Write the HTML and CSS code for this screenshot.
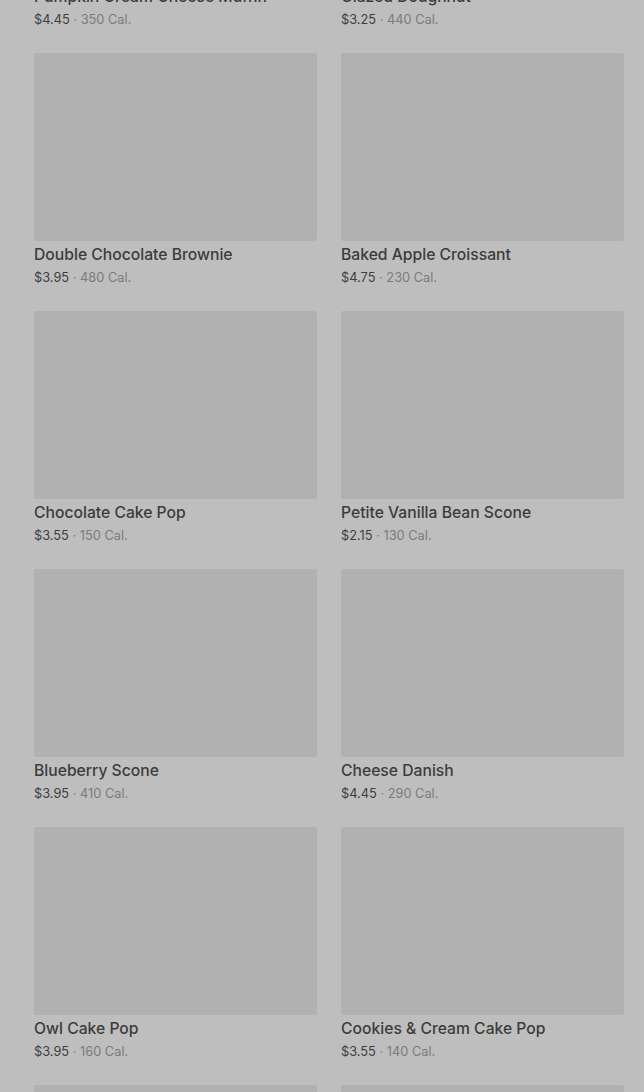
FILE: index.html
```html
<!DOCTYPE html>
<html lang="en">
<head>
    <meta charset="UTF-8">
    <meta name="viewport" content="width=device-width, initial-scale=1.0">
    <title>Bakery</title>
    <link rel="stylesheet" href="styles.css">
</head>
<body>
    <div class="menu-grid">
        <div class="item">
            <div class="item-image"></div>
            <div class="item-name">Pumpkin Cream Cheese Muffin</div>
            <div class="item-info"><span class="price">$4.45</span> · 350 Cal.</div>
        </div>
        <div class="item">
            <div class="item-image"></div>
            <div class="item-name">Glazed Doughnut</div>
            <div class="item-info"><span class="price">$3.25</span> · 440 Cal.</div>
        </div>
        <div class="item">
            <div class="item-image"></div>
            <div class="item-name">Double Chocolate Brownie</div>
            <div class="item-info"><span class="price">$3.95</span> · 480 Cal.</div>
        </div>
        <div class="item">
            <div class="item-image"></div>
            <div class="item-name">Baked Apple Croissant</div>
            <div class="item-info"><span class="price">$4.75</span> · 230 Cal.</div>
        </div>
        <div class="item">
            <div class="item-image"></div>
            <div class="item-name">Chocolate Cake Pop</div>
            <div class="item-info"><span class="price">$3.55</span> · 150 Cal.</div>
        </div>
        <div class="item">
            <div class="item-image"></div>
            <div class="item-name">Petite Vanilla Bean Scone</div>
            <div class="item-info"><span class="price">$2.15</span> · 130 Cal.</div>
        </div>
        <div class="item">
            <div class="item-image"></div>
            <div class="item-name">Blueberry Scone</div>
            <div class="item-info"><span class="price">$3.95</span> · 410 Cal.</div>
        </div>
        <div class="item">
            <div class="item-image"></div>
            <div class="item-name">Cheese Danish</div>
            <div class="item-info"><span class="price">$4.45</span> · 290 Cal.</div>
        </div>
        <div class="item">
            <div class="item-image"></div>
            <div class="item-name">Owl Cake Pop</div>
            <div class="item-info"><span class="price">$3.95</span> · 160 Cal.</div>
        </div>
        <div class="item">
            <div class="item-image"></div>
            <div class="item-name">Cookies &amp; Cream Cake Pop</div>
            <div class="item-info"><span class="price">$3.55</span> · 140 Cal.</div>
        </div>
        <div class="item">
            <div class="item-image"></div>
            <div class="item-name">Butter Croissant</div>
            <div class="item-info"><span class="price">$3.45</span> · 260 Cal.</div>
        </div>
        <div class="item">
            <div class="item-image"></div>
            <div class="item-name">Banana Nut Bread</div>
            <div class="item-info"><span class="price">$3.65</span> · 420 Cal.</div>
        </div>
    </div>
</body>
</html>
```

FILE: styles.css
```css
body {
    margin: 0;
    background-color: #bebebe;
    font-family: Inter, Roboto, "Liberation Sans", sans-serif;
    overflow: hidden;
}

.menu-grid {
    display: grid;
    grid-template-columns: 283px 283px;
    column-gap: 24px;
    row-gap: 23px;
    padding: 0 20px 0 34px;
    margin-top: -205px;
}

.item-image {
    height: 188px;
    background-color: #b1b1b1;
    border-radius: 2px;
}

.item-name {
    margin-top: 4px;
    font-size: 15.7px;
    line-height: 20px;
    font-weight: 500;
    color: #3c3c3c;
    white-space: nowrap;
}

.item-info {
    margin-top: 3px;
    font-size: 12.8px;
    line-height: 20px;
    color: #7b7b7b;
}

.item-info .price {
    color: #3e3e3e;
}
```
